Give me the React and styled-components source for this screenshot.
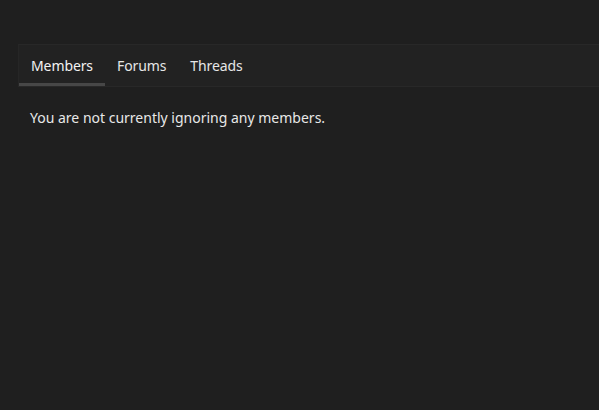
import React, { useState } from 'react'
import styled, { createGlobalStyle } from 'styled-components'

const GlobalStyle = createGlobalStyle`
  html, body {
    margin: 0;
    background: #1f1f1f;
  }
  body {
    font-family: "Noto Sans", "Open Sans", sans-serif;
    color: #e8e8e8;
  }
`

const Page = styled.div`
  min-height: 410px;
  padding: 44px 0 0 18px;
  box-sizing: border-box;
`

const TabBar = styled.div`
  display: flex;
  background: #222222;
  border-top: 1px solid #282828;
  border-bottom: 1px solid #282828;
  border-left: 1px solid #262626;
`

const Tab = styled.button`
  background: transparent;
  border: none;
  border-bottom: 3px solid ${p => (p.$active ? '#474747' : 'transparent')};
  color: ${p => (p.$active ? '#f2f2f2' : '#e6e6e6')};
  font-family: inherit;
  font-size: 14px;
  letter-spacing: -0.1px;
  padding: 11px 12px 8px;
  cursor: pointer;
  outline: none;
`

const Message = styled.p`
  margin: 0;
  padding: 21px 12px;
  font-size: 14px;
`

const tabs = ['Members', 'Forums', 'Threads']

export default function App () {
  const [active, setActive] = useState('Members')

  return <Page>
    <GlobalStyle />
    <TabBar>
      {tabs.map(t =>
        <Tab key={t} $active={t === active} onClick={() => setActive(t)}>{t}</Tab>
      )}
    </TabBar>
    <Message>You are not currently ignoring any members.</Message>
  </Page>
}
